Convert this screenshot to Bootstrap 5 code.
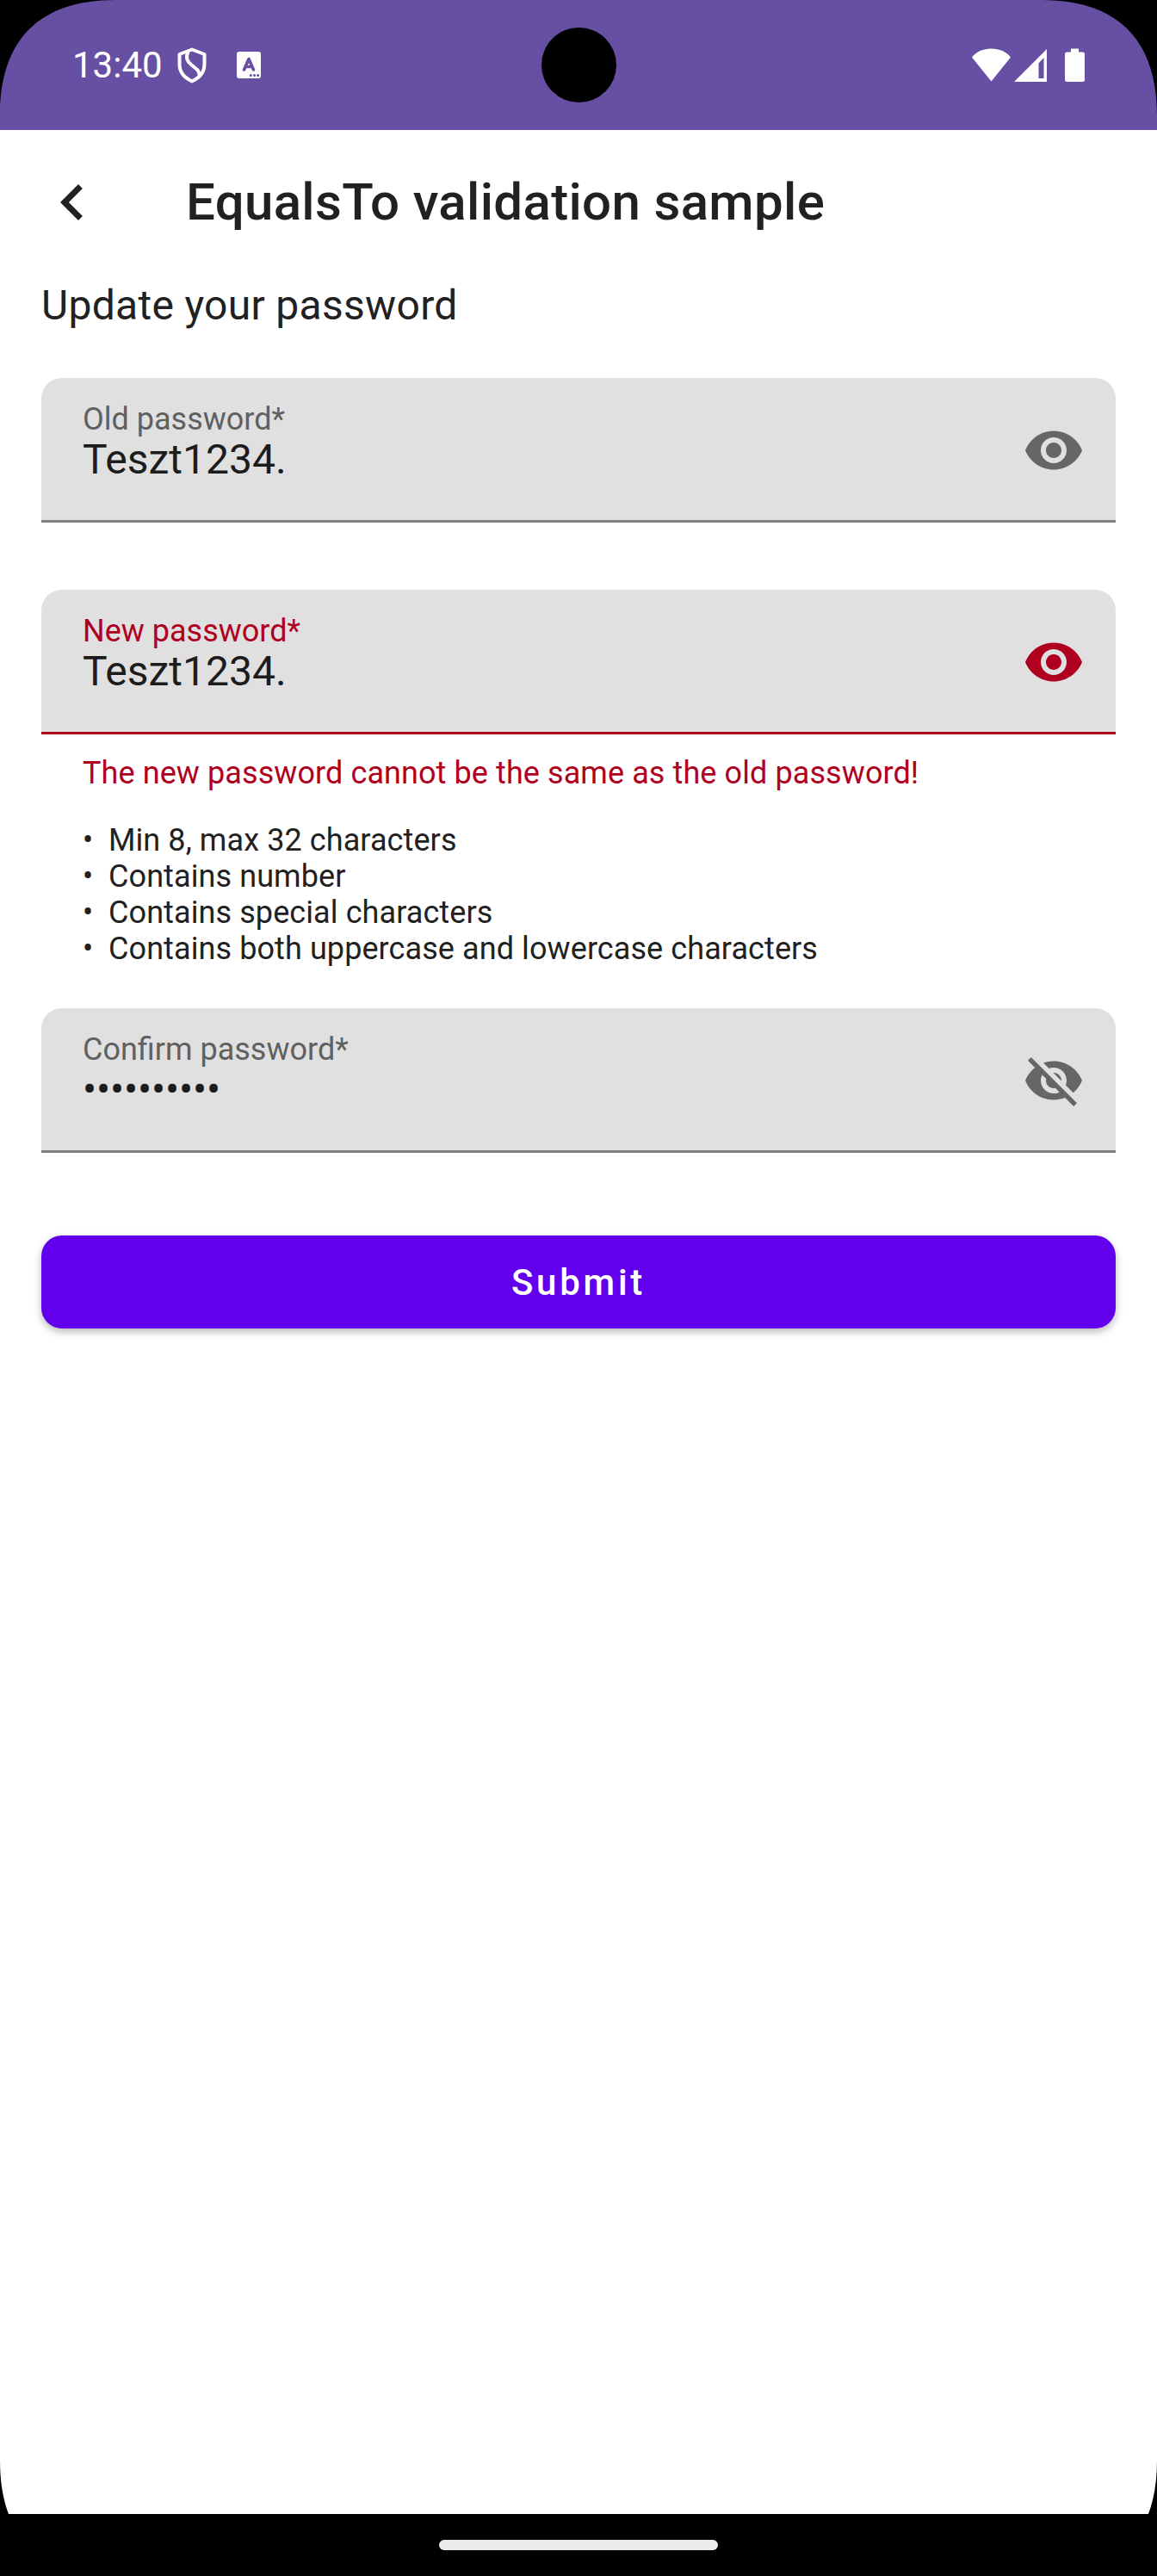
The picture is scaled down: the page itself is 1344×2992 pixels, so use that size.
<!DOCTYPE html>
<html lang="en">
<head>
<meta charset="utf-8">
<meta name="viewport" content="width=device-width, initial-scale=1">
<title>EqualsTo validation sample</title>
<link rel="stylesheet" href="https://cdn.jsdelivr.net/npm/bootstrap@5.3.0/dist/css/bootstrap.min.css">
<style>
body{font-family:Roboto,"Noto Sans",sans-serif;color:#212121;background:#fff}
svg{display:block;flex:none}
.screen{width:1344px;height:2992px;overflow:hidden}
.status{height:151px;background:#6750a3;padding:0 84px}
.clock{font-size:42px;line-height:50px;width:105px}
.shield-icon{margin-left:17px}
.keyboard-icon{margin-left:35px}
.camera{width:87px;height:87px;left:628.5px;top:31.5px}
.corner{width:134px;height:134px}
.corner-b{transform:scaleY(-1)}
.corner-e{transform:scaleX(-1)}
.corner-b.corner-e{transform:scale(-1,-1)}
.appbar{height:168px;padding-left:42px}
.title{font-size:60px;font-weight:500;line-height:72px;margin-left:90px;letter-spacing:.34px}
.content{padding:0 48px}
.subtitle{font-size:48px;line-height:72px;letter-spacing:.3px;margin-bottom:48px}
.field{height:168px;padding:27px 36px 0 48px;background:#e0e0e0;border-bottom:3px solid #808080;border-radius:24px 24px 0 0;color:#666}
.field-label{font-size:36px;line-height:42px;color:#606060}
.field-value{font-size:48px;line-height:52px;color:#1c1c1c}
.masked{letter-spacing:-.2px}
.toggle{margin-top:21px}
.invalid{border-color:#b00020;color:#b00020}
.invalid .field-label,.error{color:#b00020}
.gap-field{margin-top:78px}
.hint{font-size:36px;line-height:42px;letter-spacing:.09px;padding-left:48px}
.error{margin-top:24px}
.rules{margin:36px 0 48px}
.dot{width:30px}
.submit{height:108px;margin-top:96px;border:0;border-radius:24px;background:#6200ee;color:#fff;font-size:42px;font-weight:500;letter-spacing:3.75px;box-shadow:0 4px 10px rgba(0,0,0,.28)}
.navbar-gesture{height:72px;margin-top:auto}
.pill{width:324px;height:12px;border-radius:6px;background:#ebebeb}
</style>
<script src="https://cdn.jsdelivr.net/npm/bootstrap@5.3.0/dist/js/bootstrap.bundle.min.js"></script>
</head>
<body>
<div class="screen position-relative d-flex flex-column bg-white">
  <header class="status d-flex align-items-center text-white">
    <span class="clock">13:40</span>
    <svg class="shield-icon" width="34" height="42" viewBox="0 0 34 42" fill="none" stroke="#fff" stroke-width="4" stroke-linejoin="round"><path d="M17 2.5 2.500 8V19.500C2.500 28.500 8.500 35.500 17 39.300 25.500 35.500 31.500 28.500 31.500 19.500V8Z"/><path d="M12.500 5C9.500 12 11 16 16.500 20.500S26 27 25.500 32.500"/></svg>
    <svg class="keyboard-icon" width="28" height="31" viewBox="0 0 28 31"><rect width="28" height="31" rx="3" fill="#fff"/><path d="M8.500 21 14 8.500 19.500 21M10.500 17.500H17.500" fill="none" stroke="#6750a3" stroke-width="3.600" stroke-linecap="round" stroke-linejoin="round"/><g fill="#6750a3"><circle cx="16.300" cy="27.500" r="1.500"/><circle cx="20.500" cy="27.500" r="1.500"/><circle cx="24.700" cy="27.500" r="1.500"/></g></svg>
    <svg class="ms-auto" width="131" height="40" viewBox="0 0 131 40" fill="#fff"><path d="M0 10.500C5 4 13 .5 22.500 .5S40 4 45 10.500L22.500 38.500Z"/><path fill-rule="evenodd" d="M87 1V39H49ZM83.500 11 77.500 17.500V35H83.500Z"/><path d="M115 .5H124V4.500H128.500Q131 4.500 131 7V36.500Q131 39 128.500 39H110.500Q108 39 108 36.500V7Q108 4.500 110.500 4.500H115Z"/></svg>
  </header>

  <nav class="appbar d-flex align-items-center">
    <svg width="84" height="84" viewBox="0 0 24 24" fill="#212121"><path d="M15.410 7.410 14 6l-6 6 6 6 1.410-1.410L10.830 12z"/></svg>
    <h1 class="title mb-0">EqualsTo validation sample</h1>
  </nav>

  <main class="content d-flex flex-column">
    <div class="subtitle">Update your password</div>

    <div class="field d-flex justify-content-between">
      <div><div class="field-label">Old password*</div><div class="field-value">Teszt1234.</div></div>
      <svg class="toggle" width="72" height="72" viewBox="0 0 24 24" fill="currentColor"><path d="M12 4.500C7 4.500 2.730 7.610 1 12c1.730 4.390 6 7.500 11 7.500s9.270-3.110 11-7.500c-1.730-4.390-6-7.500-11-7.500zM12 17c-2.760 0-5-2.240-5-5s2.240-5 5-5 5 2.240 5 5-2.240 5-5 5zm0-8c-1.660 0-3 1.340-3 3s1.340 3 3 3 3-1.340 3-3-1.340-3-3-3z"/></svg>
    </div>

    <div class="field invalid gap-field d-flex justify-content-between">
      <div><div class="field-label">New password*</div><div class="field-value">Teszt1234.</div></div>
      <svg class="toggle" width="72" height="72" viewBox="0 0 24 24" fill="currentColor"><path d="M12 4.500C7 4.500 2.730 7.610 1 12c1.730 4.390 6 7.500 11 7.500s9.270-3.110 11-7.500c-1.730-4.390-6-7.500-11-7.500zM12 17c-2.760 0-5-2.240-5-5s2.240-5 5-5 5 2.240 5 5-2.240 5-5 5zm0-8c-1.660 0-3 1.340-3 3s1.340 3 3 3 3-1.340 3-3-1.340-3-3-3z"/></svg>
    </div>
    <div class="hint error">The new password cannot be the same as the old password!</div>
    <ul class="hint rules list-unstyled">
      <li class="d-flex"><span class="dot">•</span>Min 8, max 32 characters</li>
      <li class="d-flex"><span class="dot">•</span>Contains number</li>
      <li class="d-flex"><span class="dot">•</span>Contains special characters</li>
      <li class="d-flex"><span class="dot">•</span>Contains both uppercase and lowercase characters</li>
    </ul>

    <div class="field d-flex justify-content-between">
      <div><div class="field-label">Confirm password*</div><div class="field-value masked">••••••••••</div></div>
      <svg class="toggle" width="72" height="72" viewBox="0 0 24 24" fill="currentColor"><path d="M12 7c2.760 0 5 2.240 5 5 0 .65-.13 1.260-.36 1.830l2.920 2.920c1.510-1.260 2.700-2.890 3.430-4.750-1.730-4.390-6-7.500-11-7.500-1.400 0-2.740.25-3.980.7l2.160 2.160C10.740 7.130 11.350 7 12 7zM2 4.270l2.280 2.280.46.46C3.080 8.300 1.780 10.020 1 12c1.730 4.390 6 7.500 11 7.500 1.550 0 3.030-.3 4.380-.84l.42.42L19.730 22 21 20.730 3.270 3 2 4.270zM7.530 9.800l1.550 1.550c-.05.21-.08.43-.08.65 0 1.660 1.340 3 3 3 .22 0 .44-.03.65-.08l1.550 1.550c-.67.33-1.410.53-2.200.53-2.760 0-5-2.240-5-5 0-.79.2-1.530.53-2.200zm4.310-.78l3.150 3.150.02-.16c0-1.660-1.340-3-3-3l-.17.01z"/></svg>
    </div>

    <button type="button" class="submit btn w-100 p-0">Submit</button>
  </main>

  <footer class="navbar-gesture bg-black d-flex align-items-center justify-content-center"><div class="pill"></div></footer>

  <div class="camera position-absolute bg-black rounded-circle"></div>
  <svg class="corner position-absolute top-0 start-0" viewBox="0 0 134 134"><path d="M0 0H134C46 0 0 46 0 134Z"/></svg>
  <svg class="corner corner-e position-absolute top-0 end-0" viewBox="0 0 134 134"><path d="M0 0H134C46 0 0 46 0 134Z"/></svg>
  <svg class="corner corner-b position-absolute bottom-0 start-0" viewBox="0 0 134 134"><path d="M0 0H134C46 0 0 46 0 134Z"/></svg>
  <svg class="corner corner-b corner-e position-absolute bottom-0 end-0" viewBox="0 0 134 134"><path d="M0 0H134C46 0 0 46 0 134Z"/></svg>
</div>
</body>
</html>
